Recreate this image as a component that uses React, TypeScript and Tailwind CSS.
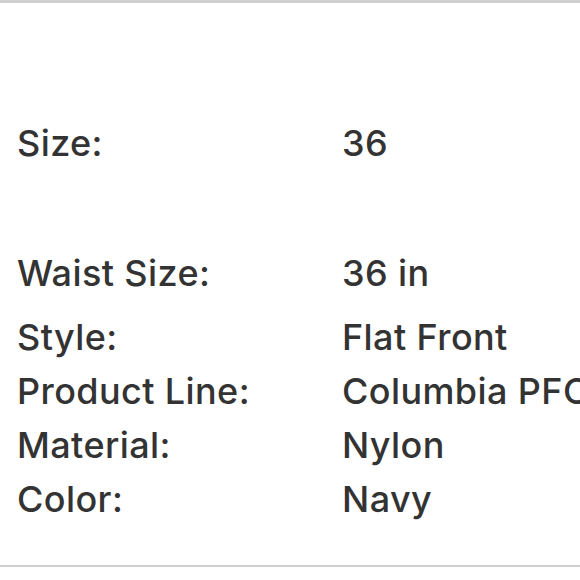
import React from "react";

const rows = [
  { label: "Style:", value: "Flat Front" },
  { label: "Product Line:", value: "Columbia PFC" },
  { label: "Material:", value: "Nylon" },
  { label: "Color:", value: "Navy" },
];

const Row = ({ label, value }: { label: string; value: string }) => (
  <div className="flex h-[54px] items-center whitespace-nowrap">
    <div className="w-[325px] shrink-0">{label}</div>
    <div>{value}</div>
  </div>
);

export default function App() {
  return (
    <div className="w-[580px] h-[580px] overflow-hidden bg-white">
      <div
        className="h-[567px] border-t-[3px] border-b-[2px] border-[#cfcfcf] pl-[17px] pt-[113px] text-[36px] font-medium tracking-[0.4px] leading-[54px] text-[#333333]"
        style={{ fontFamily: "Inter, 'Noto Sans', sans-serif" }}
      >
        <Row label="Size:" value="36" />
        <div className="mt-[76px]">
          <Row label="Waist Size:" value="36 in" />
        </div>
        <div className="mt-[10px]">
          {rows.map((r) => (
            <Row key={r.label} label={r.label} value={r.value} />
          ))}
        </div>
      </div>
    </div>
  );
}
